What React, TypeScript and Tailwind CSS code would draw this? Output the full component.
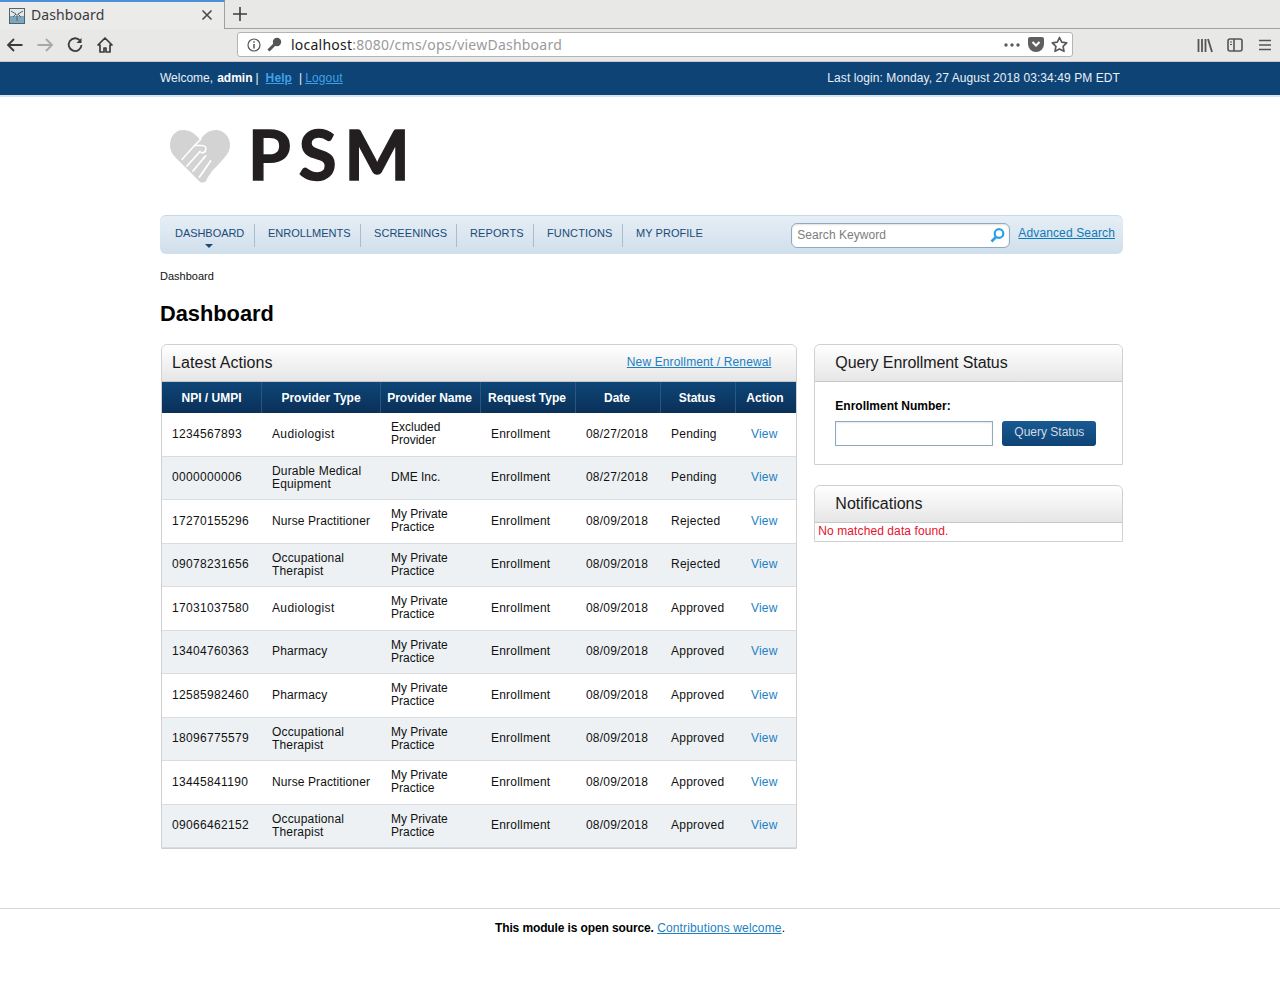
import React from "react";

const rows = [
  ["1234567893", ["Audiologist"], ["Excluded", "Provider"], "08/27/2018", "Pending"],
  ["0000000006", ["Durable Medical", "Equipment"], ["DME Inc."], "08/27/2018", "Pending"],
  ["17270155296", ["Nurse Practitioner"], ["My Private", "Practice"], "08/09/2018", "Rejected"],
  ["09078231656", ["Occupational", "Therapist"], ["My Private", "Practice"], "08/09/2018", "Rejected"],
  ["17031037580", ["Audiologist"], ["My Private", "Practice"], "08/09/2018", "Approved"],
  ["13404760363", ["Pharmacy"], ["My Private", "Practice"], "08/09/2018", "Approved"],
  ["12585982460", ["Pharmacy"], ["My Private", "Practice"], "08/09/2018", "Approved"],
  ["18096775579", ["Occupational", "Therapist"], ["My Private", "Practice"], "08/09/2018", "Approved"],
  ["13445841190", ["Nurse Practitioner"], ["My Private", "Practice"], "08/09/2018", "Approved"],
  ["09066462152", ["Occupational", "Therapist"], ["My Private", "Practice"], "08/09/2018", "Approved"],
] as [string, string[], string[], string, string][];

const cols = "grid grid-cols-[100px_119px_100px_95px_85px_75px_60px]";
const heads = ["NPI / UMPI", "Provider Type", "Provider Name", "Request Type", "Date", "Status", "Action"];
const nav = [
  ["DASHBOARD", "w-[94px] pl-[14px] tracking-[-0.05px] border-r"],
  ["ENROLLMENTS", "w-[106px] pl-[13px] border-r"],
  ["SCREENINGS", "w-[96px] pl-[13px] tracking-[0.05px] border-r"],
  ["REPORTS", "w-[77px] pl-[13px] tracking-[0.1px] border-r"],
  ["FUNCTIONS", "w-[89px] pl-[13px] tracking-[0.15px] border-r"],
  ["MY PROFILE", "pl-[13px] tracking-[0.05px]"],
];

function Heart() {
  return (
    <svg width="60" height="53" viewBox="0 0 60 53" className="block">
      <path d="M30 10C26 4 20 0 13 0 5 0 0 7 0 15c0 5 2 9 5 12l24 24c2 2 5 2 7 0l2-4 2-3 3-4 4-4 8-9c3-4 5-7 5-12 0-8-6-15-14-15-7 0-12 4-16 10z" fill="#d3d3d3" />
      <g stroke="#fff" fill="none" strokeLinecap="round" strokeLinejoin="round">
        <path d="M31 9 24.500 15.500 12 29.500" strokeWidth="1.5" />
        <path d="M24.500 15.500H32c3 0 4.500 2 3.800 4.500-.6 2-2.500 3-4.800 2.500" strokeWidth="1.5" />
        <path d="M17 36 30 21.500" strokeWidth="1.8" />
        <path d="M23 41 35.500 26" strokeWidth="1.8" />
        <path d="M29.500 47 40.500 31" strokeWidth="1.8" />
      </g>
    </svg>
  );
}

function PanelHead({ children, pad }: { children: React.ReactNode; pad: string }) {
  return (
    <div className={`h-[37px] flex items-center justify-between border-b border-[#c8c8c8] rounded-t-[6px] bg-gradient-to-b from-white to-[#e6e6e6] ${pad}`}>
      {children}
    </div>
  );
}

export default function App() {
  return (
    <div className="w-[1280px] h-[986px] bg-white overflow-hidden font-['Liberation_Sans',Arial,sans-serif] text-[12px] text-black">
      {/* browser chrome */}
      <div className="h-[29px] bg-[#e8e8e7] border-b border-[#a0a0a0] flex font-['Noto_Sans',sans-serif]">
        <div className="w-[225px] h-[29px] bg-[#ebebea] border-t-2 border-t-[#4a90d9] border-r border-r-[#a0a0a0] flex items-center pl-[9px] pr-[11px] relative">
          <svg width="16" height="16" viewBox="0 0 16 16">
            <rect x="0.5" y="0.5" width="15" height="15" fill="#7fa6bf" stroke="#54606a" />
            <path d="M1 1h14v7H1z" fill="#e4e8eb" />
            <path d="M2 3l5 3-3 3M14 3 9 6l3 3M8 6v7" stroke="#56636d" fill="none" />
          </svg>
          <span className="ml-[6px] text-[14px] tracking-[0.1px] text-[#3a3a3a] leading-[20px] flex-1 -mt-[1px]">Dashboard</span>
          <svg width="12" height="12" viewBox="0 0 12 12" className="-mt-[1px]">
            <path d="M1.500 1.500l9 9M10.500 1.500l-9 9" stroke="#4a4a4a" strokeWidth="1.6" />
          </svg>
        </div>
        <div className="w-[30px] flex items-center justify-center">
          <svg width="14" height="14" viewBox="0 0 14 14"><path d="M7 0v14M0 7h14" stroke="#3c3c3c" strokeWidth="1.6" /></svg>
        </div>
      </div>
      <div className="h-[33px] bg-[#e8e8e7] flex items-center font-['Noto_Sans',sans-serif] relative border-b border-[#c8c8c8]">
        <div className="w-[237px] flex items-center">
          <svg width="18" height="18" viewBox="0 0 18 18" className="ml-[6px]"><path d="M16.500 9H2M8 3 2 9l6 6" stroke="#3c3c3c" strokeWidth="1.8" fill="none" /></svg>
          <svg width="18" height="18" viewBox="0 0 18 18" className="ml-[12px]"><path d="M1.500 9H16M10 3l6 6-6 6" stroke="#a8a8a8" strokeWidth="1.8" fill="none" /></svg>
          <svg width="18" height="18" viewBox="0 0 18 18" className="ml-[12px]"><path d="M14 4.500A6.400 6.400 0 1 0 15.500 9" stroke="#3c3c3c" strokeWidth="1.8" fill="none" /><path d="M15.500 2v5h-5z" fill="#3c3c3c" /></svg>
          <svg width="18" height="18" viewBox="0 0 18 18" className="ml-[12px]"><path d="M9 2 2 9h2v7h4v-4h2v4h4V9h2z" stroke="#3c3c3c" strokeWidth="1.7" fill="none" strokeLinejoin="round" /></svg>
        </div>
        <div className="w-[836px] h-[25px] bg-white border border-[#b4b4b4] rounded-[3px] flex items-center pl-[9px] pr-[4px] -mt-[1px]">
          <svg width="14" height="14" viewBox="0 0 14 14"><circle cx="7" cy="7" r="6" stroke="#555" strokeWidth="1.2" fill="none" /><path d="M7 6v4.500M7 3.200v1.600" stroke="#555" strokeWidth="1.5" /></svg>
          <svg width="15" height="15" viewBox="0 0 15 15" className="ml-[6px]"><circle cx="10" cy="5" r="4.200" fill="#555" /><path d="M8 7 1.500 13.500" stroke="#555" strokeWidth="3" /></svg>
          <span className="ml-[9px] pt-[1px] text-[14px] tracking-[0.23px] leading-[20px] text-[#9a9a9a]"><span className="text-[#1a1a1a]">localhost</span>:8080/cms/ops/viewDashboard</span>
          <div className="flex-1" />
          <svg width="16" height="4" viewBox="0 0 16 4"><circle cx="2" cy="2" r="1.700" fill="#5a5a5a" /><circle cx="8" cy="2" r="1.700" fill="#5a5a5a" /><circle cx="14" cy="2" r="1.700" fill="#5a5a5a" /></svg>
          <svg width="16" height="15" viewBox="0 0 16 15" className="ml-[8px]"><path d="M2 0h12a2 2 0 0 1 2 2v5a8 8 0 0 1-16 0V2a2 2 0 0 1 2-2z" fill="#5f5f5f" /><path d="M4.500 5 8 8.500 11.500 5" stroke="#fff" strokeWidth="2" fill="none" /></svg>
          <svg width="17" height="17" viewBox="0 0 17 17" className="ml-[7px]"><path d="M8.500 1.500l2.200 4.600 5 .7-3.600 3.500.9 5-4.500-2.400L4 15.300l.9-5L1.300 6.800l5-.7z" stroke="#5a5a5a" strokeWidth="1.700" fill="none" strokeLinejoin="round" /></svg>
        </div>
        <div className="ml-[124px] flex items-center">
          <svg width="16" height="15" viewBox="0 0 16 15"><path d="M1.500 1v13M5 1v13M8.500 1v13M11 1l4 13" stroke="#555" strokeWidth="1.8" /></svg>
          <svg width="16" height="14" viewBox="0 0 16 14" className="ml-[14px]"><rect x="1" y="1" width="14" height="12" rx="2" stroke="#555" strokeWidth="1.6" fill="none" /><path d="M7 1v12" stroke="#555" strokeWidth="1.6" /><path d="M3 4h2M3 6.500h2" stroke="#555" /></svg>
          <svg width="12" height="12" viewBox="0 0 12 12" className="ml-[16px]"><path d="M0 1.500h12M0 6h12M0 10.500h12" stroke="#555" strokeWidth="1.7" /></svg>
        </div>
      </div>

      {/* top bar */}
      <div className="h-[33px] bg-[#0e4375] border-b-2 border-[#d6e4ef] box-content -mb-[2px] text-[#e8f0f6]">
        <div className="w-[960px] mx-auto h-[33px] flex items-center justify-between pb-[2px]">
          <div className="flex">
            <span>Welcome, </span>
            <b className="ml-[4px] text-white">admin</b>
            <span className="ml-[3px]">|</span>
            <a className="ml-[7px] text-[#3ea2e8] underline font-bold tracking-[0.1px]">Help</a>
            <span className="ml-[7px]">|</span>
            <a className="ml-[3px] text-[#3ea2e8] underline tracking-[0.15px]">Logout</a>
          </div>
          <div className="tracking-[0.08px]">Last login: Monday, 27 August 2018 03:34:49 PM EDT</div>
        </div>
      </div>

      <div className="w-[963px] ml-[160px]">
        {/* logo */}
        <div className="h-[120px] flex pt-[33px]">
          <div className="ml-[10px] mt-[2px]"><Heart /></div>
          <div className="ml-[18px] font-['Lato',sans-serif] font-bold text-[69px] leading-[52px] tracking-[8px] text-[#231f20] h-[52px] [-webkit-text-stroke:1.5px_#231f20]">PSM</div>
        </div>

        {/* nav */}
        <div className="h-[39px] rounded-[6px] border-t border-[#c5d8e8] bg-gradient-to-b from-[#e6eef5] to-[#d0dfec] flex items-start">
          <div className="flex pl-[1px] pt-[8px]">
            {nav.map(([n, c], i) => (
              <div key={n} className={`relative h-[23px] leading-[19px] text-[11px] text-[#1a4a78] border-[#a9bccb] whitespace-nowrap ${c}`}>
                {n}
                {i === 0 && <span className="absolute left-[44px] top-[20px] w-0 h-0 border-l-[4px] border-r-[4px] border-t-[4px] border-l-transparent border-r-transparent border-t-[#1a4a78]" />}
              </div>
            ))}
          </div>
          <div className="flex-1" />
          <div className="mt-[7px] w-[219px] h-[25px] bg-white border border-[#8fa9c4] rounded-[6px] flex items-center pl-[5px] pr-[4px] pb-[1px] text-[#7d7d7d] shadow-[inset_0_1px_2px_rgba(0,0,0,0.12)]">
            <span className="flex-1 tracking-[0.05px]">Search Keyword</span>
            <svg width="15" height="16" viewBox="0 0 15 16"><circle cx="9" cy="6.500" r="4.300" stroke="#2ba0e8" strokeWidth="2.200" fill="none" /><path d="M6 10 1.500 14.500" stroke="#2ba0e8" strokeWidth="2.600" /></svg>
          </div>
          <a className="ml-[8px] mr-[8px] mt-[9px] underline text-[#0f7ab8] leading-[16px] tracking-[0.13px]">Advanced Search</a>
        </div>

        <div className="mt-[15px] text-[11px] leading-[14px] text-[#111]">Dashboard</div>
        <h1 className="mt-[17px] text-[21.8px] leading-[28px] font-bold text-black">Dashboard</h1>

        <div className="mt-[16px] flex items-start">
          {/* table panel */}
          <div className="w-[637px] ml-[1px] border border-[#d0d0d0] border-t-[#d0d0d0] rounded-t-[6px]">
            <PanelHead pad="pl-[10px] pr-[25px]">
              <span className="text-[16px] text-[#1a1a1a] tracking-[0.07px]">Latest Actions</span>
              <a className="underline text-[#1b7fc4] tracking-[0.13px] pb-[2px]">New Enrollment / Renewal</a>
            </PanelHead>
            <div className={`${cols} h-[31px] bg-gradient-to-b from-[#0e4678] to-[#0a3058] text-white font-bold`}>
              {heads.map((h, i) => (
                <div key={h} className={`flex items-center justify-center ${i > 1 ? "pr-[2px]" : ""} ${i < 6 ? "border-r border-[#2b5680]" : ""}`}>{h}</div>
              ))}
            </div>
            {rows.map((r, i) => (
              <div key={r[0]} className={`${cols} h-[43.5px] items-center leading-[13px] text-[#111] border-b border-[#d8dde2] ${i % 2 ? "bg-[#edf1f4]" : "bg-white"}`}>
                <div className="pl-[10px] tracking-[0.33px]">{r[0]}</div>
                <div className="pl-[10px] tracking-[0.17px]">{r[1].map((t) => <div key={t} className={t === "Audiologist" ? "tracking-[0.36px]" : t === "Nurse Practitioner" ? "tracking-[0.11px]" : ""}>{t}</div>)}</div>
                <div className="pl-[10px]">{r[2].map((t) => <div key={t}>{t}</div>)}</div>
                <div className="pl-[10px] tracking-[0.2px]">Enrollment</div>
                <div className="pl-[10px] tracking-[0.2px]">{r[3]}</div>
                <div className="pl-[10px] tracking-[0.25px]">{r[4]}</div>
                <div className="pl-[15px] text-[#1b7fc4] tracking-[0.2px]">View</div>
              </div>
            ))}
          </div>

          {/* side */}
          <div className="ml-[17px] w-[309px]">
            <div className="border border-[#d0d0d0] rounded-t-[6px]">
              <PanelHead pad="pl-[20px]"><span className="text-[16px] text-[#1a1a1a] tracking-[-0.09px]">Query Enrollment Status</span></PanelHead>
              <div className="h-[82px] pl-[20px] pt-[17px]">
                <div className="font-bold leading-[14px]">Enrollment Number:</div>
                <div className="flex mt-[8px]">
                  <div className="w-[158px] h-[25px] border border-[#8fa9c4] bg-white shadow-[inset_0_1px_2px_rgba(0,0,0,0.1)]" />
                  <div className="ml-[9px] w-[94px] h-[25px] pb-[3px] rounded-[3px] bg-gradient-to-b from-[#185a92] to-[#0e4375] text-[#cfdbe6] flex items-center justify-center">Query Status</div>
                </div>
              </div>
            </div>
            <div className="mt-[20px] border border-[#d0d0d0] rounded-t-[6px]">
              <PanelHead pad="pl-[20px]"><span className="text-[16px] text-[#1a1a1a]">Notifications</span></PanelHead>
              <div className="h-[18px] pl-[3px] leading-[17px] text-[#e8112d] tracking-[0.09px]">No matched data found.</div>
            </div>
          </div>
        </div>
      </div>

      {/* footer */}
      <div className="mt-[59px] border-t border-[#d8d8d8] pt-[12px] text-center leading-[14px]">
        <b className="tracking-[-0.12px]">This module is open source.</b> <a className="underline text-[#1b7fc4] tracking-[0.15px]">Contributions welcome</a>.
      </div>
    </div>
  );
}
